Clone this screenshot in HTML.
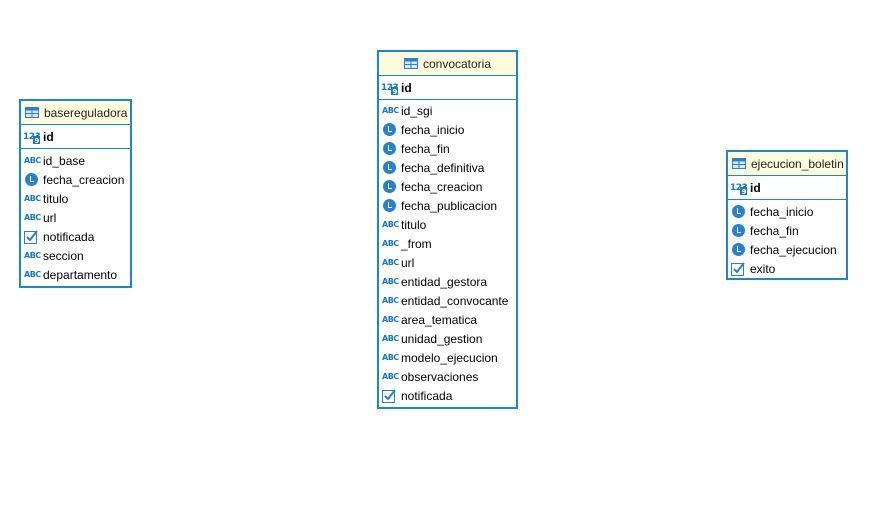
<!DOCTYPE html>
<html><head><meta charset="utf-8"><style>
body{margin:0;width:883px;height:509px;background:#fff;position:relative;font-family:"Liberation Sans","DejaVu Sans",sans-serif;font-size:12px;color:#000;overflow:hidden}
.t{position:absolute;border:2px solid #1a88c9;background:#fff;box-sizing:border-box}
.h{height:23px;background:#fffbdc;border-bottom:1px solid #1a88c9;display:flex;align-items:center;justify-content:center;color:#222}
.h.l{justify-content:flex-start;padding-left:4px}
.ti{width:14px;height:11px;margin-right:5px;display:inline-block}
.id{height:23px;border-bottom:1px solid #1a88c9;display:flex;align-items:center;padding-left:2px;font-weight:bold}
.rows{padding-top:2px}
.r{height:19px;display:flex;align-items:center;padding-left:3px}
.ic{width:17px;height:14px;margin-right:2px;display:inline-flex;align-items:center;justify-content:flex-start;flex:none}
.abc{font-size:8px;font-weight:bold;color:#1a78c2;letter-spacing:-0.5px;font-family:"DejaVu Sans",sans-serif}
.clk{width:13px;height:13px;border-radius:50%;background:#2b7fd0;position:relative;margin-left:1px}
.clk:after{content:"";position:absolute;left:5px;top:3px;height:5px;border-left:1.5px solid #fff;border-bottom:1.5px solid #fff;width:3px}
</style></head><body>
<svg width="0" height="0" style="position:absolute"><defs>
<symbol id="tb" viewBox="0 0 14 11"><rect x="0.5" y="0.5" width="13" height="10" fill="#dbeafa" stroke="#2b7fd0"/><rect x="0.5" y="0.5" width="13" height="3" fill="#2b7fd0"/><line x1="0" y1="6.5" x2="14" y2="6.5" stroke="#2b7fd0"/><line x1="7" y1="3" x2="7" y2="11" stroke="#2b7fd0"/></symbol>
<symbol id="cb" viewBox="0 0 14 14"><rect x="0.5" y="1.5" width="12" height="12" fill="#fff" stroke="#2b7fd0"/><path d="M3 7 L6 10 L13 1" fill="none" stroke="#2b7fd0" stroke-width="2"/></symbol>
<symbol id="num" viewBox="0 0 18 14"><text x="0" y="9" font-size="9" fill="#1a78c2" font-family="DejaVu Sans" letter-spacing="-0.5">123</text><rect x="10" y="6" width="7" height="8" fill="#1a78c2"/><text x="11.5" y="13" font-size="7" fill="#fff" font-family="DejaVu Sans">9</text></symbol>
</defs></svg>

<div class="t" style="left:19px;top:99px;width:113px;height:189px">
<div class="h l"><svg class="ti"><use href="#tb"/></svg>basereguladora</div>
<div class="id"><svg width="18" height="14" style="margin-right:2px"><use href="#num"/></svg>id</div>
<div class="rows">
<div class="r"><span class="ic abc">ABC</span>id_base</div>
<div class="r"><span class="ic"><span class="clk"></span></span>fecha_creacion</div>
<div class="r"><span class="ic abc">ABC</span>titulo</div>
<div class="r"><span class="ic abc">ABC</span>url</div>
<div class="r"><span class="ic"><svg width="14" height="14"><use href="#cb"/></svg></span>notificada</div>
<div class="r"><span class="ic abc">ABC</span>seccion</div>
<div class="r"><span class="ic abc">ABC</span>departamento</div>
</div></div>

<div class="t" style="left:377px;top:50px;width:141px;height:359px">
<div class="h"><svg class="ti"><use href="#tb"/></svg>convocatoria</div>
<div class="id"><svg width="18" height="14" style="margin-right:2px"><use href="#num"/></svg>id</div>
<div class="rows" style="padding-top:1px">
<div class="r"><span class="ic abc">ABC</span>id_sgi</div>
<div class="r"><span class="ic"><span class="clk"></span></span>fecha_inicio</div>
<div class="r"><span class="ic"><span class="clk"></span></span>fecha_fin</div>
<div class="r"><span class="ic"><span class="clk"></span></span>fecha_definitiva</div>
<div class="r"><span class="ic"><span class="clk"></span></span>fecha_creacion</div>
<div class="r"><span class="ic"><span class="clk"></span></span>fecha_publicacion</div>
<div class="r"><span class="ic abc">ABC</span>titulo</div>
<div class="r"><span class="ic abc">ABC</span>_from</div>
<div class="r"><span class="ic abc">ABC</span>url</div>
<div class="r"><span class="ic abc">ABC</span>entidad_gestora</div>
<div class="r"><span class="ic abc">ABC</span>entidad_convocante</div>
<div class="r"><span class="ic abc">ABC</span>area_tematica</div>
<div class="r"><span class="ic abc">ABC</span>unidad_gestion</div>
<div class="r"><span class="ic abc">ABC</span>modelo_ejecucion</div>
<div class="r"><span class="ic abc">ABC</span>observaciones</div>
<div class="r"><span class="ic"><svg width="14" height="14"><use href="#cb"/></svg></span>notificada</div>
</div></div>

<div class="t" style="left:726px;top:150px;width:122px;height:130px">
<div class="h l"><svg class="ti"><use href="#tb"/></svg>ejecucion_boletin</div>
<div class="id"><svg width="18" height="14" style="margin-right:2px"><use href="#num"/></svg>id</div>
<div class="rows">
<div class="r"><span class="ic"><span class="clk"></span></span>fecha_inicio</div>
<div class="r"><span class="ic"><span class="clk"></span></span>fecha_fin</div>
<div class="r"><span class="ic"><span class="clk"></span></span>fecha_ejecucion</div>
<div class="r"><span class="ic"><svg width="14" height="14"><use href="#cb"/></svg></span>exito</div>
</div></div>
</body></html>
